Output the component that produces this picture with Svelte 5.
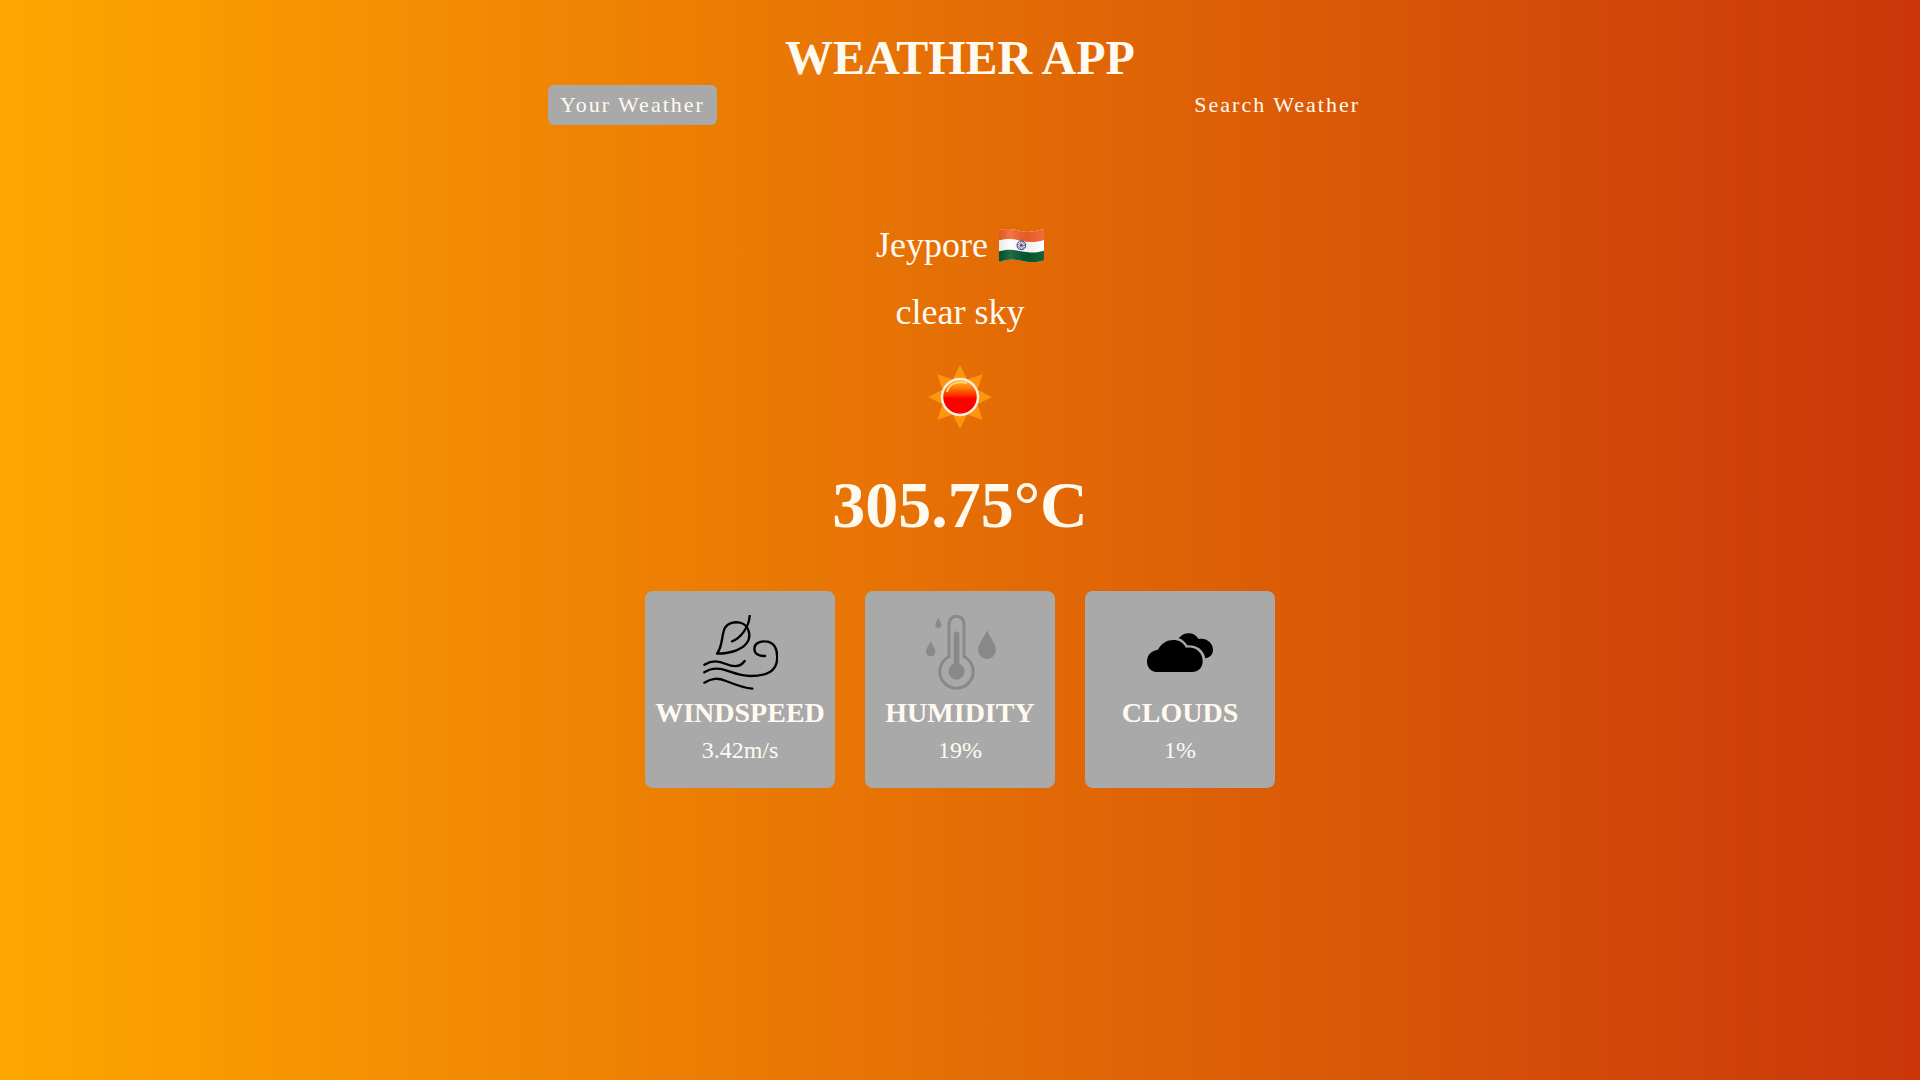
<script>
  let tab = $state('your');
  const stats = [
    { id: 'wind', label: 'WINDSPEED', value: '3.42m/s' },
    { id: 'humidity', label: 'HUMIDITY', value: '19%' },
    { id: 'clouds', label: 'CLOUDS', value: '1%' }
  ];
  const rays = [0, 45, 90, 135, 180, 225, 270, 315];
</script>

<div class="page">
  <h1>WEATHER APP</h1>
  <nav class="tabs">
    <button type="button" class:active={tab === 'your'} onclick={() => (tab = 'your')}>Your Weather</button>
    <button type="button" class:active={tab === 'search'} onclick={() => (tab = 'search')}>Search Weather</button>
  </nav>

  <main>
    <div class="place">
      <p>Jeypore</p>
      <svg class="flag" viewBox="0 0 135 99" role="img" aria-label="India">
        <defs>
          <clipPath id="flag-shape">
            <path d="M0 6Q0 4 3 3C22-2 42 0 65 6C88 12 108 7 130 1Q135-1 135 4V92Q135 94 132 95C112 101 90 101 66 95C42 89 24 91 4 98Q0 99 0 95Z" />
          </clipPath>
          <linearGradient id="fold" x1="0" x2="1">
            <stop offset="0" stop-color="#000" stop-opacity=".08" />
            <stop offset=".25" stop-color="#fff" stop-opacity=".12" />
            <stop offset=".65" stop-color="#000" stop-opacity=".06" />
            <stop offset="1" stop-color="#fff" stop-opacity=".06" />
          </linearGradient>
        </defs>
        <g clip-path="url(#flag-shape)">
          <rect y="-5" width="135" height="110" fill="#fff" />
          <path d="M0-5H135V33C110 41 88 41 65 35C42 29 24 29 0 34Z" fill="#f2622c" />
          <path d="M0 67C24 60 42 61 65 67C88 72 110 72 135 65V105H0Z" fill="#04592f" />
          <rect y="-5" width="135" height="110" fill="url(#fold)" />
        </g>
        <g fill="none" stroke="#3c3f7c">
          <circle cx="67" cy="49" r="13" stroke-width="3" />
          <circle cx="67" cy="49" r="8" stroke-width="8" stroke-dasharray="2 2.2" opacity=".65" />
        </g>
        <circle cx="67" cy="49" r="4" fill="#3c3f7c" />
      </svg>
    </div>
    <p>clear sky</p>
    <svg class="sun" viewBox="-40 -40 80 80" role="img" aria-label="Sunny">
      <defs>
        <linearGradient id="disc" x1="0" x2="0" y1="0" y2="1">
          <stop offset="0" stop-color="#ffb52e" />
          <stop offset=".2" stop-color="#ff8a0a" />
          <stop offset=".45" stop-color="#fc3000" />
          <stop offset=".54" stop-color="#fe0000" />
          <stop offset="1" stop-color="#fe0000" />
        </linearGradient>
        <filter id="soft" x="-20%" y="-20%" width="140%" height="140%">
          <feGaussianBlur stdDeviation=".7" />
        </filter>
      </defs>
      <g filter="url(#soft)">
        {#each rays as angle}
          <path d="M-7-18L0-32L7-18Z" fill="#fd960f" transform="rotate({angle})" />
        {/each}
        <circle r="18" fill="url(#disc)" stroke="#fdeedd" stroke-width="2.5" />
        <path d="M-13-5C-11-14-2-16 7-14" fill="none" stroke="#ffd66b" stroke-width="2" />
      </g>
    </svg>
    <h2>305.75°C</h2>

    <section class="cards">
      {#each stats as stat}
        <article>
          {#if stat.id === 'wind'}
            <svg viewBox="188 90 225 225" fill="none" stroke="#000" stroke-width="7" stroke-linecap="round" stroke-linejoin="round" aria-hidden="true">
              <path d="M328 93C326 126 301 160 275 169" />
              <path d="M230 206C246 186 243 160 251 135C258 114 283 108 303 114C323 121 331 145 325 164C314 194 270 205 230 206Z" />
              <path d="M192 239C217 225 235 228 257 237C283 248 301 246 313 228" />
              <path d="M192 262C214 248 236 248 260 257C286 266 302 273 330 273C373 273 407 261 410 225C413 193 402 169 373 169C355 168 342 178 342 191C342 207 357 214 374 213" />
              <path d="M192 293C216 279 232 278 257 288C287 300 309 309 336 311" />
            </svg>
          {:else if stat.id === 'humidity'}
            <svg viewBox="188 90 225 225" fill="#898989" aria-hidden="true">
              <path d="M266 215V116a22.5 22.5 0 0 1 45 0V215A50 50 0 1 1 266 215Z" fill="none" stroke="#898989" stroke-width="9" />
              <path d="M280 148a8.500 8.500 0 0 1 17 0V237A24 24 0 1 1 280 237Z" />
              <path d="M234 98C238 107 243 113 243 120a9 9 0 0 1-18 0C225 113 230 107 234 98Z" />
              <path d="M211 168C216 181 225 190 225 200a14 14 0 0 1-28 0C197 190 206 181 211 168Z" />
              <path d="M380 136C389 158 407 177 407 195a27 27 0 0 1-54 0C353 177 371 158 380 136Z" />
            </svg>
          {:else}
            <svg viewBox="188 90 225 225" aria-hidden="true">
              <path d="M295 160C309 141 340 138 355 162C379 158 398 174 398 195C398 208 389 218 375 220C370 194 350 180 321 181C315 171 306 163 295 160Z" />
              <path d="M229 261C211 261 200 247 200 229C200 210 214 196 233 194C251 157 302 155 317 188C346 183 367 202 367 228C367 248 354 261 335 261Z" />
            </svg>
          {/if}
          <h3>{stat.label}</h3>
          <span>{stat.value}</span>
        </article>
      {/each}
    </section>
  </main>
</div>

<style>
  :global(body) {
    margin: 0;
  }
  .page {
    box-sizing: border-box;
    min-height: 100vh;
    padding: 30px 16px;
    display: flex;
    flex-direction: column;
    align-items: center;
    background: linear-gradient(to right, #ffa600, #ca360a);
    color: floralwhite;
    font-family: 'Liberation Serif', 'Times New Roman', serif;
  }
  h1, h2, h3, p {
    margin: 0;
  }
  h1 {
    font-size: 48px;
    line-height: 55px;
    text-align: center;
  }
  .tabs {
    width: 100%;
    max-width: 824px;
    display: flex;
    justify-content: space-between;
  }
  button {
    padding: 8px 12px;
    border: 0;
    border-radius: 6px;
    background: transparent;
    color: inherit;
    font: 22px/24px 'Liberation Serif', 'Times New Roman', serif;
    letter-spacing: 2px;
    cursor: pointer;
  }
  button.active {
    background: darkgray;
  }
  main {
    margin-top: 98px;
    display: flex;
    flex-direction: column;
    align-items: center;
    gap: 23px;
  }
  p {
    font-size: 36px;
    line-height: 44px;
  }
  .place {
    display: flex;
    align-items: center;
    gap: 11px;
  }
  .flag {
    width: 45px;
    height: 33px;
  }
  .sun {
    width: 80px;
    height: 80px;
  }
  h2 {
    font-size: 66px;
    line-height: 89px;
  }
  .cards {
    margin-top: 19px;
    display: flex;
    flex-wrap: wrap;
    justify-content: center;
    gap: 30px;
  }
  article {
    box-sizing: border-box;
    width: 190px;
    padding: 24px 0;
    display: flex;
    flex-direction: column;
    align-items: center;
    gap: 7px;
    border-radius: 8px;
    background: darkgray;
  }
  article svg {
    width: 75px;
    height: 75px;
  }
  h3 {
    font-size: 28px;
    line-height: 32px;
  }
  span {
    font-size: 24px;
    line-height: 28px;
  }
</style>
